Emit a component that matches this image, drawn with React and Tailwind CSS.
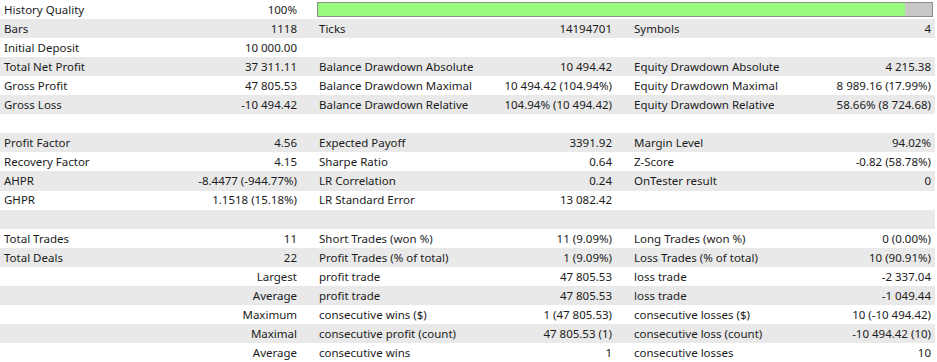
const ROWS = [
  ["History Quality", "100%", "bar"],
  ["Bars", "1118", "Ticks", "14194701", "Symbols", "4"],
  ["Initial Deposit", "10 000.00", "", "", "", ""],
  ["Total Net Profit", "37 311.11", "Balance Drawdown Absolute", "10 494.42", "Equity Drawdown Absolute", "4 215.38"],
  ["Gross Profit", "47 805.53", "Balance Drawdown Maximal", "10 494.42 (104.94%)", "Equity Drawdown Maximal", "8 989.16 (17.99%)"],
  ["Gross Loss", "-10 494.42", "Balance Drawdown Relative", "104.94% (10 494.42)", "Equity Drawdown Relative", "58.66% (8 724.68)"],
  ["", "", "", "", "", ""],
  ["Profit Factor", "4.56", "Expected Payoff", "3391.92", "Margin Level", "94.02%"],
  ["Recovery Factor", "4.15", "Sharpe Ratio", "0.64", "Z-Score", "-0.82 (58.78%)"],
  ["AHPR", "-8.4477 (-944.77%)", "LR Correlation", "0.24", "OnTester result", "0"],
  ["GHPR", "1.1518 (15.18%)", "LR Standard Error", "13 082.42", "", ""],
  ["", "", "", "", "", ""],
  ["Total Trades", "11", "Short Trades (won %)", "11 (9.09%)", "Long Trades (won %)", "0 (0.00%)"],
  ["Total Deals", "22", "Profit Trades (% of total)", "1 (9.09%)", "Loss Trades (% of total)", "10 (90.91%)"],
  ["", "Largest", "profit trade", "47 805.53", "loss trade", "-2 337.04"],
  ["", "Average", "profit trade", "47 805.53", "loss trade", "-1 049.44"],
  ["", "Maximum", "consecutive wins ($)", "1 (47 805.53)", "consecutive losses ($)", "10 (-10 494.42)"],
  ["", "Maximal", "consecutive profit (count)", "47 805.53 (1)", "consecutive loss (count)", "-10 494.42 (10)"],
  ["", "Average", "consecutive wins", "1", "consecutive losses", "10"],
];

function Cell({ label, value, last }) {
  return (
    <div
      className={`flex items-center justify-between pl-1 whitespace-nowrap ${
        last ? "pr-1" : "pr-[18px]"
      }`}
    >
      <span>{label}</span>
      <span>{value}</span>
    </div>
  );
}

export default function App() {
  return (
    <div
      className="w-[937px] h-[362px] bg-white text-[#1b1b1b] text-[11.5px] overflow-hidden"
      style={{ fontFamily: '"Segoe UI", "Noto Sans", sans-serif' }}
    >
      <div className="w-[935px] h-[362px] grid grid-rows-[repeat(19,minmax(0,1fr))]">
        {ROWS.map((r, i) => (
          <div
            key={i}
            className={`grid grid-cols-[315px_315px_1fr] ${
              i % 2 === 1 ? "bg-[#e9e9e9]" : "bg-white"
            }`}
          >
            <Cell label={r[0]} value={r[1]} />
            {r[2] === "bar" ? (
              <div className="col-span-2 flex items-center pl-[2px] pr-[2px]">
                <div className="h-[15px] w-full border border-[#8c8c8c] bg-[#c8c8c8] flex">
                  <div className="h-full w-[95.6%] bg-[#98fa7f]" />
                </div>
              </div>
            ) : (
              <>
                <Cell label={r[2]} value={r[3]} />
                <Cell label={r[4]} value={r[5]} last />
              </>
            )}
          </div>
        ))}
      </div>
    </div>
  );
}
